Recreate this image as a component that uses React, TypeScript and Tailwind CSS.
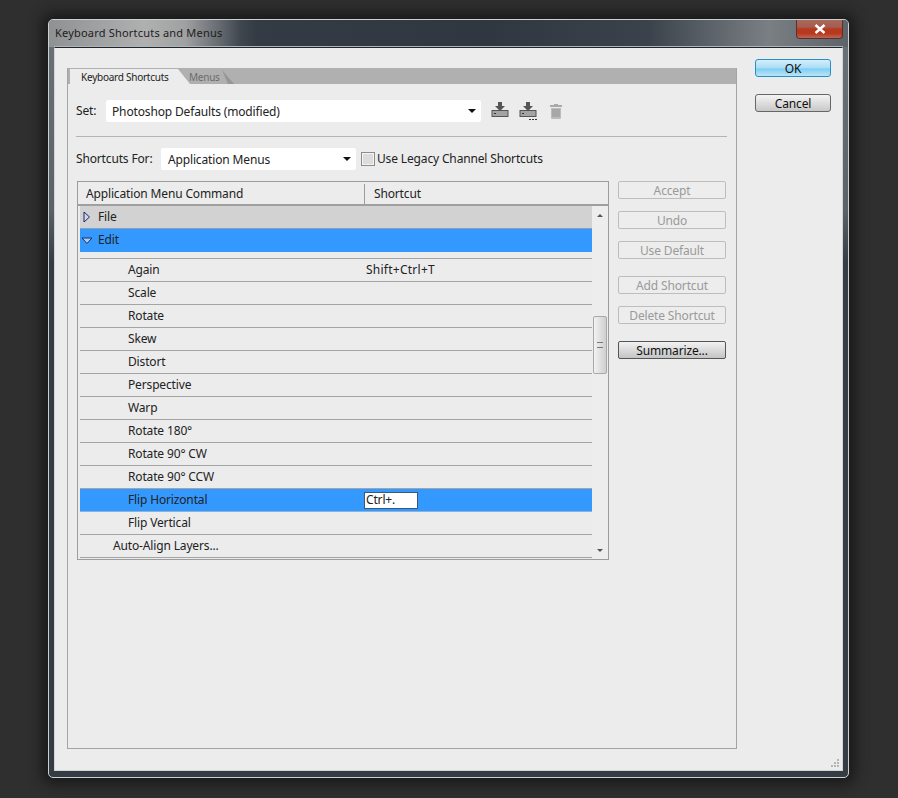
import React from "react";

const font = "font-['Noto_Sans','DejaVu_Sans',sans-serif]";

const rows = [
  { label: "Again", indent: "pl-[48px]", shortcut: "Shift+Ctrl+T" },
  { label: "Scale", indent: "pl-[48px]" },
  { label: "Rotate", indent: "pl-[48px]" },
  { label: "Skew", indent: "pl-[48px]" },
  { label: "Distort", indent: "pl-[48px]" },
  { label: "Perspective", indent: "pl-[48px]" },
  { label: "Warp", indent: "pl-[48px]" },
  { label: "Rotate 180°", indent: "pl-[48px]" },
  { label: "Rotate 90° CW", indent: "pl-[48px]" },
  { label: "Rotate 90° CCW", indent: "pl-[48px]" },
  { label: "Flip Horizontal", indent: "pl-[48px]", active: true },
  { label: "Flip Vertical", indent: "pl-[48px]" },
  { label: "Auto-Align Layers...", indent: "pl-[33px]" },
];

function Caret() {
  return <div className="h-0 w-0 border-x-[4px] border-t-[4px] border-x-transparent border-t-[#111]" />;
}

function Combo({ label, className }: { label: string; className: string }) {
  return (
    <div className={`flex h-[22px] items-center justify-between rounded-[2px] bg-white pr-[5px] ${className}`}>
      <span className="pt-px">{label}</span>
      <Caret />
    </div>
  );
}

function SideButton({ label, strong, className = "" }: { label: string; strong?: boolean; className?: string }) {
  return (
    <div
      className={`flex h-[18px] w-[108px] items-center justify-center rounded-[2px] border pt-px ${
        strong
          ? "border-[#555] bg-gradient-to-b from-[#f2f2f2] to-[#c4c4c4] text-[#111]"
          : "border-[#bdbdbd] bg-[#ededed] text-[#9a9a9a]"
      } ${className}`}
    >
      {label}
    </div>
  );
}

function SaveIcon({ dots }: { dots?: boolean }) {
  return (
    <svg width="18" height="18" viewBox="0 0 18 18" className="shrink-0">
      <path d="M7 0h4v4h3l-5 5-5-5h3z" fill="#555" />
      <rect x="1" y="8.5" width="16" height="6" fill="#a4a4a4" stroke="#555" />
      <rect x="3" y="11" width="2" height="1" fill="#333" />
      {dots && <path d="M10 17h2v1h-2zM13 17h2v1h-2zM16 17h2v1h-2z" fill="#333" />}
    </svg>
  );
}

function TrashIcon() {
  return (
    <svg width="12" height="16" viewBox="0 0 12 16" className="ml-[3px] shrink-0">
      <path d="M4 1h4v1h4v2H0V2h4z" fill="#a8a8a8" />
      <path d="M1 5h10v10a1 1 0 0 1-1 1H2a1 1 0 0 1-1-1z" fill="#bcbcbc" />
      <path d="M3 6v8M5 6v8M7 6v8M9 6v8" stroke="#939393" strokeWidth="1" />
    </svg>
  );
}

export default function App() {
  return (
    <div className={`h-[798px] w-[898px] overflow-hidden bg-[#2f2f2f] pl-[48px] pt-[19px] text-[12px] leading-none tracking-[-0.15px] text-[#222] ${font}`}>
      {/* window frame */}
      <div className="flex h-[759px] w-[801px] flex-col rounded-[5px] border border-[#c9d0d4] bg-[linear-gradient(180deg,#6d7276_0%,#5d6267_25%,#353c44_32%,#353c44_100%)] px-[5px] pb-[6px] shadow-[0_0_14px_6px_#191919]">
        {/* title bar */}
        <div className="-mx-[5px] flex h-[27px] shrink-0 items-start justify-between rounded-t-[4px] bg-[linear-gradient(90deg,#8f9193_0%,#b0b0b0_12%,#a0a1a2_17%,#6a6f74_21%,#3f464e_24%,#333b44_26%,#2f3740_55%,#3a434b_75%,#7a7f84_90%,#5d6369_100%)] pr-[5px]">
          <span className="pl-[6px] pt-[7px] text-[11px] tracking-[0.2px] text-[#1d1d1d]">Keyboard Shortcuts and Menus</span>
          <div className="flex h-[19px] w-[47px] items-center justify-center rounded-b-[4px] border border-t-0 border-[#5b2f2a] bg-[linear-gradient(180deg,#a8695d_0%,#a55c4e_40%,#b5391c_50%,#b8391d_75%,#b9675a_100%)]">
            <svg width="14" height="10" viewBox="0 0 14 10">
              <path d="M2.5 1l9 8M11.5 1l-9 8" stroke="#fff" strokeWidth="2.4" />
            </svg>
          </div>
        </div>

        {/* client area */}
        <div className="relative flex min-h-0 flex-1 border border-x-[#cfd5d9] border-b-[#cfd5d9] border-t-[#20262c] bg-[#ececec] pl-[12px] pr-[12px] pt-[20px] shadow-[0_-1px_0_#aeb4b8]">
          {/* tabbed panel */}
          <div className="flex h-[681px] w-[670px] shrink-0 flex-col border-b border-r border-l border-[#a4a4a4]">
            <div className="flex h-[16px] shrink-0 items-end bg-[#b0b0b0] pl-[2px]">
              <div className="flex h-[15px] w-[108px] shrink-0 items-center bg-[#ececec] pl-[11px] text-[10px] tracking-[-0.25px]">Keyboard Shortcuts</div>
              <svg width="12" height="15" viewBox="0 0 12 15" className="shrink-0">
                <path d="M0 0l12 15H0z" fill="#ececec" />
              </svg>
              <div className="-ml-[2px] flex h-[14px] w-[34px] shrink-0 items-center pl-px text-[10px] tracking-[-0.25px] text-[#6c6c6c]">Menus</div>
              <svg width="12" height="14" viewBox="0 0 12 14" className="shrink-0">
                <path d="M0 0l12 14H6z" fill="#969696" />
              </svg>
            </div>

            <div className="flex flex-col px-[8px] pt-[16px]">
              <div className="flex items-center">
                <span className="w-[30px]">Set:</span>
                <Combo label="Photoshop Defaults (modified)" className="w-[375px] pl-[6px]" />
                <div className="ml-[10px] flex items-center gap-[10px]">
                  <SaveIcon />
                  <SaveIcon dots />
                  <TrashIcon />
                </div>
              </div>

              <div className="mt-[14px] h-px w-[651px] bg-[#b4b4b4]" />

              <div className="mt-[11px] flex items-center">
                <span className="w-[85px]">Shortcuts For:</span>
                <Combo label="Application Menus" className="w-[195px] pl-[7px]" />
                <div className="ml-[5px] h-[14px] w-[14px] border border-[#8c8c8c] bg-[#dcdcdc] shadow-[inset_0_0_0_1px_#f4f4f4]" />
                <span className="ml-[2px]">Use Legacy Channel Shortcuts</span>
              </div>

              <div className="mt-[11px] flex items-start pl-[1px]">
                {/* command table */}
                <div className="w-[532px] shrink-0 border border-[#9c9c9c]">
                  <div className="flex h-[24px] items-center border-b-2 border-[#9f9f9f] pt-px">
                    <div className="flex h-[20px] w-[287px] items-center border-r border-[#9c9c9c] pl-[8px]">Application Menu Command</div>
                    <div className="pl-[9px]">Shortcut</div>
                  </div>
                  <div className="flex h-[353px] overflow-hidden">
                    <div className="w-[514px] shrink-0 pl-[2px]">
                      <div className="flex h-[23px] items-center border-b border-[#8a9fb5] bg-[#d2d2d2] pl-[3px]">
                        <svg width="8" height="12" viewBox="0 0 8 12" className="shrink-0">
                          <path d="M1 1l5.5 5L1 11z" fill="#cfd6e6" stroke="#23236b" />
                        </svg>
                        <span className="ml-[7px]">File</span>
                      </div>
                      <div className="flex h-[23px] items-center bg-[#3399ff] pb-[1px] pl-[1px]">
                        <svg width="12" height="8" viewBox="0 0 12 8" className="mt-[2px] shrink-0">
                          <path d="M1 1l5 5.5L11 1z" fill="#a8cdf5" stroke="#1c2a6b" />
                        </svg>
                        <span className="ml-[5px]">Edit</span>
                      </div>
                      <div className="h-[7px] border-b border-[#a4a4a4]" />
                      {rows.map((row) => (
                        <div
                          key={row.label}
                          className={`flex h-[23px] items-center border-b ${row.indent} ${
                            row.active ? "border-[#8ab4dd] bg-[#3399ff]" : "border-[#a4a4a4]"
                          }`}
                        >
                          <span className="w-[238px] shrink-0">{row.label}</span>
                          {row.shortcut && <span className="tracking-[0.25px]">{row.shortcut}</span>}
                          {row.active && (
                            <div className="-ml-[2px] flex h-[17px] w-[54px] items-center border border-[#39587c] bg-white pl-px">Ctrl+.</div>
                          )}
                        </div>
                      ))}
                    </div>
                    {/* scrollbar */}
                    <div className="flex w-[16px] shrink-0 flex-col items-center bg-[#ededed]">
                      <div className="mt-[8px] h-0 w-0 border-x-[3px] border-b-[3px] border-x-transparent border-b-[#555]" />
                      <div className="mt-[99px] flex h-[58px] w-[14px] shrink-0 items-center justify-center rounded-[2px] border border-[#a8a8a8] bg-gradient-to-r from-[#f2f2f2] to-[#cfcfcf]">
                        <div className="h-[6px] w-[6px] border-y border-[#777] bg-[linear-gradient(180deg,transparent_40%,#777_40%,#777_60%,transparent_60%)]" />
                      </div>
                      <div className="mt-[175px] h-0 w-0 border-x-[3px] border-t-[3px] border-x-transparent border-t-[#555]" />
                    </div>
                  </div>
                </div>

                {/* side buttons */}
                <div className="ml-[9px] flex flex-col">
                  <SideButton label="Accept" />
                  <SideButton label="Undo" className="mt-[12px]" />
                  <SideButton label="Use Default" className="mt-[12px]" />
                  <SideButton label="Add Shortcut" className="mt-[17px]" />
                  <SideButton label="Delete Shortcut" className="mt-[12px]" />
                  <SideButton label="Summarize..." strong className="mt-[17px]" />
                </div>
              </div>
            </div>
          </div>

          {/* OK / Cancel */}
          <div className="ml-[18px] flex w-[76px] shrink-0 flex-col">
            <div className="-mt-[9px] flex h-[18px] items-center justify-center rounded-[3px] border border-[#2b8fc4] bg-[linear-gradient(180deg,#d3effb_0%,#a9ddf6_50%,#7fcdf2_55%,#b9e6f9_100%)] pt-px text-[#111]">OK</div>
            <div className="mt-[17px] flex h-[18px] items-center justify-center rounded-[3px] border border-[#666] bg-gradient-to-b from-[#f4f4f4] to-[#c8c8c8] pt-px text-[#111]">Cancel</div>
          </div>

          {/* resize grip */}
          <svg width="10" height="10" viewBox="0 0 10 10" className="absolute bottom-[1px] right-[2px]">
            <path d="M7 0h2v2H7zM4 3h2v2H4zM7 3h2v2H7zM1 6h2v2H1zM4 6h2v2H4zM7 6h2v2H7z" fill="#b4b4b4" />
          </svg>
        </div>
      </div>
    </div>
  );
}
